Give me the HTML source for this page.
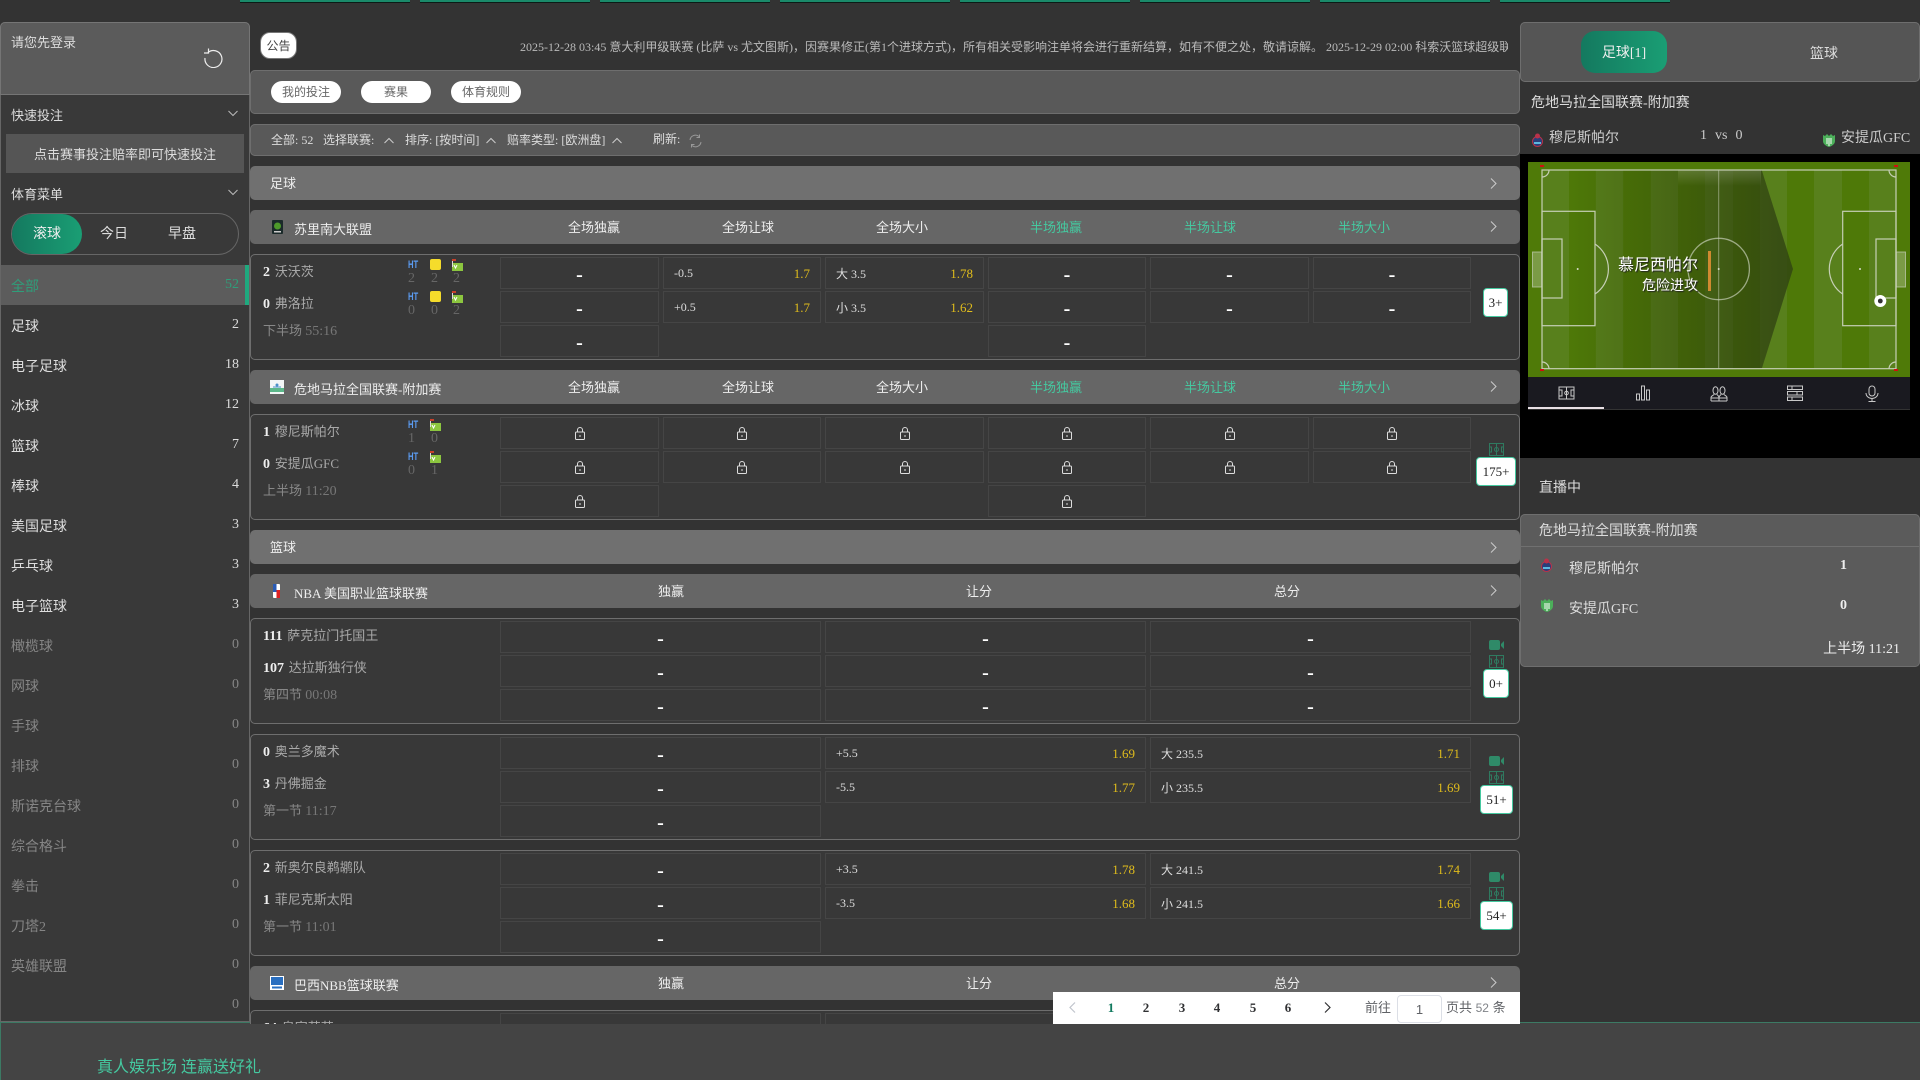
<!DOCTYPE html>
<html lang="zh"><head><meta charset="utf-8"><title>体育</title>
<style>
*{box-sizing:border-box}
html,body{margin:0;padding:0;width:1920px;height:1080px;overflow:hidden;background:#333;font-family:"Liberation Serif","WenQuanYi Zen Hei","Noto Sans CJK SC",serif;color:#ddd}
.a{position:absolute;white-space:nowrap}
.t{position:absolute;white-space:nowrap;line-height:20px;font-size:13px}
.ban{position:absolute;top:0;width:170px;height:3px;background:#1a8a6a;border-bottom:1px solid #0b1b16}
.pill{position:absolute;top:81px;width:70px;height:22px;background:#fff;border-radius:11px;color:#666;font-size:12px;line-height:22px;text-align:center}
.bar{position:absolute;left:250px;width:1270px;background:#595959;box-shadow:inset 0 0 0 1px #6e6e6e;border-radius:5px}
.sec{position:absolute;left:250px;width:1270px;height:34px;background:#707070;border-radius:5px}
.lg{position:absolute;left:250px;width:1270px;height:34px;background:#666;border-radius:5px}
.lg .t,.sec .t{color:#eee}
.g{color:#45c9a0!important}
.h{transform:translateX(-50%);top:8px}
.n{top:10px;left:44px}
.cv{position:absolute;left:1240px;top:12px;width:7px;height:11px;fill:none;stroke:#ccc;stroke-width:1}
.lg .cv{top:11px}
.m{position:absolute;left:250px;width:1270px;height:106px;background:#383838;box-shadow:inset 0 0 0 1px #6e6e6e;border-radius:5px}
.c{position:absolute;height:32px;border:1px solid #454545;display:flex;align-items:center;justify-content:center;font-size:12px;color:#ddd}
.c.o{justify-content:space-between;padding:1px 10px 0}
.c i{font-style:normal;color:#e0bc1c;font-size:13px}
.r1{top:3px}.r2{top:37px}.r3{top:71px}
.c1{left:250px;width:159px}.c2{left:413px;width:158px}.c3{left:575px;width:159px}.c4{left:738px;width:158px}.c5{left:900px;width:159px}.c6{left:1063px;width:158px}
.w1{left:250px;width:321px}.w2{left:575px;width:321px}.w3{left:900px;width:321px}
.d{font-weight:bold;font-size:20px;color:#fff;position:relative;top:2px;line-height:20px}
.l{width:10px;height:13px;fill:none;stroke:#ddd;stroke-width:1}
.tm{left:13px;color:#a9a9a9}
.tm b{color:#eee;font-size:14px;margin-right:1.500px}
.ti{left:13px;top:67px;color:#888}
.ti span{font-size:14px;color:#777}
.ht{position:absolute;font:bold 11px/12px "Liberation Sans",sans-serif;color:#5b9bf0;transform:scaleX(.7);transform-origin:left}
.num{position:absolute;font-size:14px;line-height:16px;color:#666;margin-top:1px}
.yc{position:absolute;width:11px;height:11px;background:#f5dc2b;border-radius:2px}
.fl{position:absolute;width:11px;height:12px}
.more{position:absolute;background:#fff;border:1px solid #45c9a0;border-radius:4px;color:#222;font-size:13px;text-align:center;height:29px;line-height:28px;top:34px}
.pi{position:absolute;width:15px;height:13px;fill:none;stroke:#2f7a60;stroke-width:1}
.cam{position:absolute;width:15px;height:10px;fill:#2f8a68}
.li{position:absolute;left:11px;font-size:14px;line-height:20px;color:#ddd;white-space:nowrap;margin-top:2px}
.ct{position:absolute;right:1681px;font-size:14px;line-height:20px;color:#ddd;white-space:nowrap;margin-top:1px}
.z{color:#858585}
.pg{position:absolute;top:0;font:bold 13px/32px "Liberation Serif",serif;color:#303133;transform:translateX(-50%)}
.ico{position:absolute;top:385px;width:18px;height:17px;fill:none;stroke:#c8c8c8;stroke-width:1}
</style></head><body>
<svg width="0" height="0" style="position:absolute">
<symbol id="lock" viewBox="0 0 10 13"><path d="M2.5 5V3a2.5 2.5 0 0 1 5 0v2"/><rect x=".5" y="5" width="9" height="7.5" rx="1"/><path d="M5 8v2"/></symbol>
<symbol id="chr" viewBox="0 0 7 11"><path d="M1 .5l5 5-5 5"/></symbol>
<symbol id="pit" viewBox="0 0 15 13"><rect x=".5" y=".5" width="14" height="12"/><path d="M7.5.5v12M.5 4h2v5h-2M14.5 4h-2v5h2"/><circle cx="7.5" cy="6.5" r="2"/></symbol>
<symbol id="cam" viewBox="0 0 15 10"><rect width="11" height="10" rx="2"/><path d="M12 4l3-3v8l-3-3z"/></symbol>
<symbol id="cor" viewBox="0 0 11 12"><rect y="4" width="11" height="8" fill="#8cc63f"/><rect width="4" height="2" fill="#c8402a"/><rect y="2" width="1" height="6" fill="#ddd"/><path d="M2 6l1.5 3 1.5-3" fill="none" stroke="#fff"/></symbol>
</svg>

<!-- footer -->
<div class="a" style="left:0;top:1022px;width:1920px;height:58px;background:#444"></div>
<div class="a" style="left:0;top:1022px;width:250px;height:1px;background:#3c7a64"></div>
<div class="a" style="left:1520px;top:1022px;width:400px;height:1px;background:#3c7a64"></div>
<div class="a" style="left:0;top:1022px;width:1px;height:58px;background:#3c7a64"></div>
<div class="a" style="left:97px;top:1058px;font-size:16px;line-height:20px;color:#45c9a0">真人娱乐场 连赢送好礼</div>

<!-- banners -->
<div class="ban" style="left:240px"></div><div class="ban" style="left:420px"></div><div class="ban" style="left:600px"></div><div class="ban" style="left:780px"></div><div class="ban" style="left:960px"></div><div class="ban" style="left:1140px"></div><div class="ban" style="left:1320px"></div><div class="ban" style="left:1500px"></div>

<!-- LEFT -->
<div class="a" style="left:0;top:22px;width:250px;height:1000px;background:#393939;border:1px solid #666;border-top:0;border-radius:5px 5px 0 0"></div>
<div class="a" style="left:0;top:22px;width:250px;height:73px;background:#5b5b5b;border:1px solid #757575;border-radius:5px 5px 0 0"></div>
<div class="t" style="left:11px;top:33px;color:#ddd">请您先登录</div>
<svg class="a" style="left:203px;top:47px" width="20" height="21" fill="none" stroke="#eee" stroke-width="1.2"><path d="M5 5.5A8.5 8.5 0 1 1 2 11"/><path d="M5.500 1.500v4.500h-4.500"/></svg>
<div class="t" style="left:11px;top:106px;color:#ddd">快速投注</div>
<svg class="a" style="left:228px;top:110px" width="10" height="7" fill="none" stroke="#bbb"><path d="M.5 1l4.500 4.500L9.500 1"/></svg>
<div class="a" style="left:6px;top:134px;width:238px;height:39px;background:#555;text-align:center;font-size:13px;line-height:41px;color:#ddd">点击赛事投注赔率即可快速投注</div>
<div class="t" style="left:11px;top:185px;color:#ddd">体育菜单</div>
<svg class="a" style="left:228px;top:189px" width="10" height="7" fill="none" stroke="#bbb"><path d="M.5 1l4.500 4.500L9.500 1"/></svg>
<div class="a" style="left:11px;top:213px;width:228px;height:42px;border:1px solid #666;border-radius:21px"></div>
<div class="a" style="left:12px;top:214px;width:70px;height:40px;border-radius:20px;background:linear-gradient(90deg,#14795f,#1a9e74);text-align:center;font-size:14px;line-height:41px;color:#eee">滚球</div>
<div class="t" style="left:100px;top:225px;font-size:14px;color:#ddd">今日</div>
<div class="t" style="left:168px;top:225px;font-size:14px;color:#ddd">早盘</div>
<div class="a" style="left:1px;top:265px;width:248px;height:40px;background:#5c5c5c"></div>
<div class="a" style="left:245px;top:265px;width:4px;height:40px;background:#1fa97e"></div>
<div class="li" style="top:276px;color:#2f9e7a">全部</div><div class="ct" style="top:274px;color:#2f9e7a">52</div>
<div class="li" style="top:316px">足球</div><div class="ct" style="top:314px">2</div>
<div class="li" style="top:356px">电子足球</div><div class="ct" style="top:354px">18</div>
<div class="li" style="top:396px">冰球</div><div class="ct" style="top:394px">12</div>
<div class="li" style="top:436px">篮球</div><div class="ct" style="top:434px">7</div>
<div class="li" style="top:476px">棒球</div><div class="ct" style="top:474px">4</div>
<div class="li" style="top:516px">美国足球</div><div class="ct" style="top:514px">3</div>
<div class="li" style="top:556px">乒乓球</div><div class="ct" style="top:554px">3</div>
<div class="li" style="top:596px">电子篮球</div><div class="ct" style="top:594px">3</div>
<div class="li z" style="top:636px">橄榄球</div><div class="ct z" style="top:634px">0</div>
<div class="li z" style="top:676px">网球</div><div class="ct z" style="top:674px">0</div>
<div class="li z" style="top:716px">手球</div><div class="ct z" style="top:714px">0</div>
<div class="li z" style="top:756px">排球</div><div class="ct z" style="top:754px">0</div>
<div class="li z" style="top:796px">斯诺克台球</div><div class="ct z" style="top:794px">0</div>
<div class="li z" style="top:836px">综合格斗</div><div class="ct z" style="top:834px">0</div>
<div class="li z" style="top:876px">拳击</div><div class="ct z" style="top:874px">0</div>
<div class="li z" style="top:916px">刀塔2</div><div class="ct z" style="top:914px">0</div>
<div class="li z" style="top:956px">英雄联盟</div><div class="ct z" style="top:954px">0</div>
<div class="ct z" style="top:994px">0</div>

<!-- MAIN -->
<div class="a" style="left:0;top:0;width:1920px;height:1024px;overflow:hidden;pointer-events:none">
<div class="a" style="left:250px;top:3px;width:1270px;height:1021px;background:#333"></div>
<div class="a" style="left:260px;top:32px;width:37px;height:27px;background:#fff;border:1px solid #777;border-radius:10px;color:#444;font-size:12px;line-height:27px;text-align:center">公告</div>
<div class="a" style="left:520px;top:37px;width:988px;overflow:hidden;font-size:12px;line-height:20px;color:#bbb">2025-12-28 03:45 意大利甲级联赛 (比萨 vs 尤文图斯)，因赛果修正(第1个进球方式)，所有相关受影响注单将会进行重新结算，如有不便之处，敬请谅解。 2025-12-29 02:00 科索沃篮球超级联赛</div>
<div class="bar" style="top:70px;height:44px"></div>
<div class="pill" style="left:271px">我的投注</div><div class="pill" style="left:361px">赛果</div><div class="pill" style="left:451px">体育规则</div>
<div class="bar" style="top:124px;height:32px"></div>
<div class="t" style="left:271px;top:130px;font-size:12px">全部: 52</div>
<div class="t" style="left:323px;top:130px;font-size:12px">选择联赛:</div>
<svg class="a" style="left:384px;top:137px" width="10" height="7" fill="none" stroke="#ccc"><path d="M.5 6L5 1.500 9.500 6"/></svg>
<div class="t" style="left:405px;top:130px;font-size:12px">排序: [按时间]</div>
<svg class="a" style="left:486px;top:137px" width="10" height="7" fill="none" stroke="#ccc"><path d="M.5 6L5 1.500 9.500 6"/></svg>
<div class="t" style="left:507px;top:130px;font-size:12px">赔率类型: [欧洲盘]</div>
<svg class="a" style="left:612px;top:137px" width="10" height="7" fill="none" stroke="#ccc"><path d="M.5 6L5 1.500 9.500 6"/></svg>
<div class="t" style="left:653px;top:129px;font-size:12px">刷新:</div>
<svg class="a" style="left:689px;top:134px" width="13" height="14" fill="none" stroke="#999"><path d="M1 6a5.500 5.500 0 0 1 9-3.500M12 8a5.500 5.500 0 0 1-9 3.500M10.500 .5v3h-3M2.500 13.500v-3h3"/></svg>

<div class="sec" style="top:166px"><div class="t" style="left:20px;top:8px">足球</div><svg class="cv" viewBox="0 0 7 11"><use href="#chr"/></svg></div>

<div class="lg" style="top:210px"><svg class="a" style="left:22px;top:10px" width="11" height="14"><rect width="11" height="14" rx="1" fill="#1b2a2a"/><circle cx="5.500" cy="6" r="3.500" fill="#4d9a2a"/><rect x="2" y="11" width="7" height="1.500" fill="#ccc"/></svg>
<div class="t n">苏里南大联盟</div><div class="t h" style="left:344px">全场独赢</div><div class="t h" style="left:498px">全场让球</div><div class="t h" style="left:652px">全场大小</div><div class="t h g" style="left:806px">半场独赢</div><div class="t h g" style="left:960px">半场让球</div><div class="t h g" style="left:1114px">半场大小</div><svg class="cv" viewBox="0 0 7 11"><use href="#chr"/></svg></div>

<div class="m" style="top:254px">
<div class="t tm" style="top:8px"><b>2</b> 沃沃茨</div><div class="t tm" style="top:40px"><b>0</b> 弗洛拉</div><div class="t ti">下半场 <span>55:16</span></div>
<div class="ht" style="left:158px;top:5px">HT</div><div class="yc" style="left:180px;top:5px"></div><svg class="fl" style="left:202px;top:5px"><use href="#cor"/></svg>
<div class="num" style="left:158px;top:16px">2</div><div class="num" style="left:181px;top:16px">2</div><div class="num" style="left:203px;top:16px">2</div>
<div class="ht" style="left:158px;top:37px">HT</div><div class="yc" style="left:180px;top:37px"></div><svg class="fl" style="left:202px;top:37px"><use href="#cor"/></svg>
<div class="num" style="left:158px;top:48px">0</div><div class="num" style="left:181px;top:48px">0</div><div class="num" style="left:203px;top:48px">2</div>
<div class="c c1 r1"><b class="d">-</b></div><div class="c c2 r1 o"><span>-0.5</span><i>1.7</i></div><div class="c c3 r1 o"><span>大 3.5</span><i>1.78</i></div><div class="c c4 r1"><b class="d">-</b></div><div class="c c5 r1"><b class="d">-</b></div><div class="c c6 r1"><b class="d">-</b></div>
<div class="c c1 r2"><b class="d">-</b></div><div class="c c2 r2 o"><span>+0.5</span><i>1.7</i></div><div class="c c3 r2 o"><span>小 3.5</span><i>1.62</i></div><div class="c c4 r2"><b class="d">-</b></div><div class="c c5 r2"><b class="d">-</b></div><div class="c c6 r2"><b class="d">-</b></div>
<div class="c c1 r3"><b class="d">-</b></div><div class="c c4 r3"><b class="d">-</b></div>
<div class="more" style="left:1233px;width:25px">3+</div>
</div>

<div class="lg" style="top:370px"><svg class="a" style="left:20px;top:10px" width="14" height="14"><rect width="14" height="14" fill="#f2f6f6"/><rect y="8" width="14" height="4" fill="#5cb88a"/><path d="M3 7h8" stroke="#4a90c8"/><circle cx="7" cy="5" r="1.500" fill="#4a90c8"/></svg>
<div class="t n">危地马拉全国联赛-附加赛</div><div class="t h" style="left:344px">全场独赢</div><div class="t h" style="left:498px">全场让球</div><div class="t h" style="left:652px">全场大小</div><div class="t h g" style="left:806px">半场独赢</div><div class="t h g" style="left:960px">半场让球</div><div class="t h g" style="left:1114px">半场大小</div><svg class="cv" viewBox="0 0 7 11"><use href="#chr"/></svg></div>

<div class="m" style="top:414px">
<div class="t tm" style="top:8px"><b>1</b> 穆尼斯帕尔</div><div class="t tm" style="top:40px"><b>0</b> 安提瓜GFC</div><div class="t ti">上半场 <span>11:20</span></div>
<div class="ht" style="left:158px;top:5px">HT</div><svg class="fl" style="left:180px;top:5px"><use href="#cor"/></svg>
<div class="num" style="left:158px;top:16px">1</div><div class="num" style="left:181px;top:16px">0</div>
<div class="ht" style="left:158px;top:37px">HT</div><svg class="fl" style="left:180px;top:37px"><use href="#cor"/></svg>
<div class="num" style="left:158px;top:48px">0</div><div class="num" style="left:181px;top:48px">1</div>
<div class="c c1 r1"><svg class="l"><use href="#lock"/></svg></div><div class="c c2 r1"><svg class="l"><use href="#lock"/></svg></div><div class="c c3 r1"><svg class="l"><use href="#lock"/></svg></div><div class="c c4 r1"><svg class="l"><use href="#lock"/></svg></div><div class="c c5 r1"><svg class="l"><use href="#lock"/></svg></div><div class="c c6 r1"><svg class="l"><use href="#lock"/></svg></div>
<div class="c c1 r2"><svg class="l"><use href="#lock"/></svg></div><div class="c c2 r2"><svg class="l"><use href="#lock"/></svg></div><div class="c c3 r2"><svg class="l"><use href="#lock"/></svg></div><div class="c c4 r2"><svg class="l"><use href="#lock"/></svg></div><div class="c c5 r2"><svg class="l"><use href="#lock"/></svg></div><div class="c c6 r2"><svg class="l"><use href="#lock"/></svg></div>
<div class="c c1 r3"><svg class="l"><use href="#lock"/></svg></div><div class="c c4 r3"><svg class="l"><use href="#lock"/></svg></div>
<svg class="pi" style="left:1239px;top:29px"><use href="#pit"/></svg>
<div class="more" style="left:1226px;width:40px;top:43px">175+</div>
</div>

<div class="sec" style="top:530px"><div class="t" style="left:20px;top:8px">篮球</div><svg class="cv" viewBox="0 0 7 11"><use href="#chr"/></svg></div>

<div class="lg" style="top:574px"><svg class="a" style="left:23px;top:10px" width="7" height="14"><rect width="7" height="14" rx="1" fill="#fff"/><rect x="0" y="0" width="3.500" height="8" fill="#2a5bb5"/><rect x="3.500" y="6" width="3.500" height="8" fill="#d22"/></svg>
<div class="t n">NBA 美国职业篮球联赛</div><div class="t h" style="left:421px">独赢</div><div class="t h" style="left:729px">让分</div><div class="t h" style="left:1037px">总分</div><svg class="cv" viewBox="0 0 7 11"><use href="#chr"/></svg></div>

<div class="m" style="top:618px">
<div class="t tm" style="top:8px"><b>111</b> 萨克拉门托国王</div><div class="t tm" style="top:40px"><b>107</b> 达拉斯独行侠</div><div class="t ti">第四节 <span>00:08</span></div>
<div class="c w1 r1"><b class="d">-</b></div><div class="c w2 r1"><b class="d">-</b></div><div class="c w3 r1"><b class="d">-</b></div>
<div class="c w1 r2"><b class="d">-</b></div><div class="c w2 r2"><b class="d">-</b></div><div class="c w3 r2"><b class="d">-</b></div>
<div class="c w1 r3"><b class="d">-</b></div><div class="c w2 r3"><b class="d">-</b></div><div class="c w3 r3"><b class="d">-</b></div>
<svg class="cam" style="left:1239px;top:22px"><use href="#cam"/></svg><svg class="pi" style="left:1239px;top:37px"><use href="#pit"/></svg>
<div class="more" style="left:1233px;width:26px;top:51px">0+</div>
</div>

<div class="m" style="top:734px">
<div class="t tm" style="top:8px"><b>0</b> 奥兰多魔术</div><div class="t tm" style="top:40px"><b>3</b> 丹佛掘金</div><div class="t ti">第一节 <span>11:17</span></div>
<div class="c w1 r1"><b class="d">-</b></div><div class="c w2 r1 o"><span>+5.5</span><i>1.69</i></div><div class="c w3 r1 o"><span>大 235.5</span><i>1.71</i></div>
<div class="c w1 r2"><b class="d">-</b></div><div class="c w2 r2 o"><span>-5.5</span><i>1.77</i></div><div class="c w3 r2 o"><span>小 235.5</span><i>1.69</i></div>
<div class="c w1 r3"><b class="d">-</b></div>
<svg class="cam" style="left:1239px;top:22px"><use href="#cam"/></svg><svg class="pi" style="left:1239px;top:37px"><use href="#pit"/></svg>
<div class="more" style="left:1230px;width:33px;top:51px">51+</div>
</div>

<div class="m" style="top:850px">
<div class="t tm" style="top:8px"><b>2</b> 新奥尔良鹈鹕队</div><div class="t tm" style="top:40px"><b>1</b> 菲尼克斯太阳</div><div class="t ti">第一节 <span>11:01</span></div>
<div class="c w1 r1"><b class="d">-</b></div><div class="c w2 r1 o"><span>+3.5</span><i>1.78</i></div><div class="c w3 r1 o"><span>大 241.5</span><i>1.74</i></div>
<div class="c w1 r2"><b class="d">-</b></div><div class="c w2 r2 o"><span>-3.5</span><i>1.68</i></div><div class="c w3 r2 o"><span>小 241.5</span><i>1.66</i></div>
<div class="c w1 r3"><b class="d">-</b></div>
<svg class="cam" style="left:1239px;top:22px"><use href="#cam"/></svg><svg class="pi" style="left:1239px;top:37px"><use href="#pit"/></svg>
<div class="more" style="left:1230px;width:33px;top:51px">54+</div>
</div>

<div class="lg" style="top:966px"><svg class="a" style="left:20px;top:10px" width="14" height="14"><rect width="14" height="14" fill="#fff"/><rect x="1" y="1" width="12" height="8" fill="#2a6fc0"/><rect x="2" y="10.500" width="10" height="2" fill="#2a6fc0"/></svg>
<div class="t n">巴西NBB篮球联赛</div><div class="t h" style="left:421px">独赢</div><div class="t h" style="left:729px">让分</div><div class="t h" style="left:1037px">总分</div><svg class="cv" viewBox="0 0 7 11"><use href="#chr"/></svg></div>

<div class="m" style="top:1010px">
<div class="t tm" style="top:8px"><b>64</b> 皇家苏苏</div>
<div class="c w1 r1"></div><div class="c w2 r1"></div><div class="c w3 r1"></div>
</div>

<div class="a" style="left:1053px;top:992px;width:467px;height:32px;background:#fff">
<svg class="a" style="left:16px;top:10px" width="7" height="11" fill="none" stroke="#c0c4cc" stroke-width="1.200"><path d="M6 .5l-5 5 5 5"/></svg>
<div class="pg" style="left:58px;color:#127a5f">1</div><div class="pg" style="left:93px">2</div><div class="pg" style="left:129px">3</div><div class="pg" style="left:164px">4</div><div class="pg" style="left:200px">5</div><div class="pg" style="left:235px">6</div>
<svg class="a" style="left:271px;top:10px" width="7" height="11" fill="none" stroke="#303133" stroke-width="1.200"><path d="M1 .5l5 5-5 5"/></svg>
<div class="t" style="left:312px;top:6px;color:#606266">前往</div>
<div class="a" style="left:344px;top:3px;width:45px;height:28px;border:1px solid #dcdfe6;border-radius:4px;text-align:center;font:13px/27px 'Liberation Sans',sans-serif;color:#606266">1</div>
<div class="t" style="left:393px;top:6px;color:#606266;font-family:'Liberation Sans','WenQuanYi Zen Hei',sans-serif"><span>页共 </span><span style="font-size:12px;color:#808388">52</span><span> 条</span></div>
</div>
</div>

<!-- RIGHT -->
<div class="a" style="left:1520px;top:22px;width:400px;height:60px;background:#555;box-shadow:inset 0 0 0 1px #6e6e6e;border-radius:5px"></div>
<div class="a" style="left:1581px;top:31px;width:86px;height:42px;border-radius:14px;background:linear-gradient(90deg,#14795f,#1a9e74);text-align:center;font-size:14px;line-height:46px;color:#eee">足球[1]</div>
<div class="t" style="left:1810px;top:45px;font-size:14px;color:#ddd">篮球</div>
<div class="t" style="left:1531px;top:94px;font-size:14px;color:#ddd">危地马拉全国联赛-附加赛</div>
<svg class="a" style="left:1532px;top:133px" width="11" height="14"><circle cx="5.500" cy="8.500" r="5" fill="#2a3f7a" stroke="#b8324a"/><circle cx="5.500" cy="3" r="2.500" fill="#b8324a"/><rect x="2" y="9" width="7" height="2" fill="#5cb8e0"/></svg>
<div class="t" style="left:1549px;top:129px;font-size:14px;color:#ccc">穆尼斯帕尔</div>
<div class="t" style="left:1700px;top:126px;font-size:14px;color:#ccc;word-spacing:4.500px">1 vs 0</div>
<svg class="a" style="left:1823px;top:133px" width="12" height="14"><path d="M0 2l2 1 2-2 2 2 2-2 2 2 2-1v6c0 3-3 5-6 6-3-1-6-3-6-6z" fill="#4caf5a"/><path d="M4 5v6M6 5v8M8 5v6" stroke="#fff"/></svg>
<div class="t" style="left:1841px;top:129px;font-size:14px;color:#ccc">安提瓜GFC</div>

<div class="a" style="left:1520px;top:154px;width:400px;height:304px;background:#000"></div>
<svg class="a" style="left:1528px;top:162px" width="382" height="215" viewBox="0 0 382 215">
<defs><linearGradient id="gd" gradientUnits="userSpaceOnUse" x1="40" y1="0" x2="250" y2="0"><stop offset="0" stop-color="#2a3a00" stop-opacity="0"/><stop offset="1" stop-color="#2e3f12" stop-opacity=".75"/></linearGradient>
<linearGradient id="gt" x1="0" y1="0" x2="0" y2="1"><stop offset="0" stop-color="#fff" stop-opacity=".16"/><stop offset="1" stop-color="#fff" stop-opacity="0"/></linearGradient></defs>
<rect width="382" height="215" fill="#4f7a08"/>
<g fill="#58801c"><rect x="14" y="8" width="27" height="199"/><rect x="67.700" y="8" width="27.600" height="199"/><rect x="122.700" y="8" width="27.300" height="199"/><rect x="177" y="8" width="28" height="199"/><rect x="232" y="8" width="27" height="199"/><rect x="286" y="8" width="28" height="199"/><rect x="341" y="8" width="27" height="199"/></g>
<g fill="#4e7908"><rect x="41" y="8" width="26.700" height="199"/><rect x="95.300" y="8" width="27.400" height="199"/><rect x="150" y="8" width="27" height="199"/><rect x="205" y="8" width="27" height="199"/><rect x="259" y="8" width="27" height="199"/><rect x="314" y="8" width="27" height="199"/></g>
<path d="M40 8H233.700L265 107 233.700 207H40z" fill="url(#gd)"/>
<rect x="150" y="8" width="83" height="16" fill="url(#gt)"/>
<g fill="none" stroke="#c6cfb6" stroke-width="1.200">
<rect x="14" y="8" width="354" height="198.700"/>
<rect x="14" y="49.300" width="53" height="114.400"/><rect x="14" y="77" width="20" height="59"/><path d="M67 82A30 30 0 0 1 67 132"/>
<rect x="314.700" y="49.300" width="53.300" height="114.400"/><rect x="348" y="77" width="20" height="59"/><path d="M314.700 82A30 30 0 0 0 314.700 132"/>
<path d="M14 15A7 7 0 0 0 21 8M361 8A7 7 0 0 0 368 15M14 200A7 7 0 0 1 21 207M361 207A7 7 0 0 1 368 200"/>
</g>
<g fill="#fff" fill-opacity=".25" stroke="#c6cfb6" stroke-opacity=".7"><rect x="4.500" y="90" width="9.500" height="35"/><rect x="368" y="90" width="9.500" height="35"/></g>
<path d="M190.700 8V207" stroke="#c6cfb6" stroke-opacity=".55" stroke-width="1"/>
<circle cx="190.700" cy="107" r="30.700" fill="none" stroke="#c6cfb6" stroke-opacity=".7" stroke-width="1.300"/>
<g fill="#d8dccb"><circle cx="49.700" cy="107" r="1"/><circle cx="190.700" cy="107" r="1"/><circle cx="332" cy="107" r="1"/></g>
<g fill="#d01010"><rect x="12" y="3" width="4" height="2"/><rect x="366" y="3" width="4" height="2"/><rect x="12" y="207" width="4" height="2"/><rect x="366" y="207" width="4" height="2"/></g>
<rect x="180" y="89" width="3" height="40" fill="#d08a30"/>
<circle cx="352.300" cy="139" r="6" fill="#fff"/><circle cx="352.300" cy="139" r="2.400" fill="#333"/>
</svg>
<div class="a" style="left:1541px;top:254px;width:157px;text-align:right;font-size:16px;line-height:24px;color:#fff;text-shadow:1px 1px 1px #222">慕尼西帕尔</div>
<div class="a" style="left:1541px;top:277px;width:157px;text-align:right;font-size:14px;line-height:20px;color:#fff;text-shadow:1px 1px 1px #222">危险进攻</div>

<div class="a" style="left:1528px;top:377px;width:382px;height:33px;background:#1a1a20;border-bottom:1px solid #333"></div>
<div class="a" style="left:1528px;top:407px;width:76px;height:2px;background:#e8e0e4"></div>
<svg class="ico" style="left:1558px"><rect x="1" y="2" width="15" height="12" stroke-width="1"/><path d="M8.500 2v12M1 5h3v6h-3M16 5h-3v6h3"/><circle cx="8.500" cy="8" r="1.800"/></svg>
<svg class="ico" style="left:1635px"><rect x="1.500" y="9" width="3" height="6"/><rect x="6.500" y="1" width="3" height="14"/><rect x="11.500" y="5" width="3" height="10"/></svg>
<svg class="ico" style="left:1710px"><ellipse cx="5.500" cy="5.500" rx="2.500" ry="3.800"/><ellipse cx="12.500" cy="5.500" rx="2.500" ry="3.800"/><path d="M1 16v-3.500c0-1.500 2-2 3-3M7 9.500c1 1 2 1.500 2 3V16M9 12.500c0-1.500 1-2 2-3M14 9.500c1 1 3 1.500 3 3V16M1 16h16M1 13h16"/></svg>
<svg class="ico" style="left:1787px"><rect x=".5" y="1" width="15" height="3.500"/><rect x=".5" y="6.500" width="15" height="3.500"/><rect x=".5" y="12" width="15" height="3.500"/><path d="M5 1v3.500M10 6.500V10M5 12v3.500"/></svg>
<svg class="ico" style="left:1863px"><rect x="6" y="1" width="6" height="10" rx="3"/><path d="M3 8a6 5.500 0 0 0 12 0M9 13.500v3M5.500 16.500h7"/></svg>

<div class="t" style="left:1539px;top:479px;font-size:14px;color:#ddd">直播中</div>
<div class="a" style="left:1520px;top:514px;width:400px;height:153px;background:#5b5b5b;box-shadow:inset 0 0 0 1px #6e6e6e;border-radius:5px"></div>
<div class="a" style="left:1521px;top:546px;width:398px;height:1px;background:#707070"></div>
<div class="t" style="left:1539px;top:522px;font-size:14px;color:#ddd">危地马拉全国联赛-附加赛</div>
<svg class="a" style="left:1541px;top:558px" width="11" height="14"><circle cx="5.500" cy="8.500" r="5" fill="#2a3f7a" stroke="#b8324a"/><circle cx="5.500" cy="3" r="2.500" fill="#b8324a"/><rect x="2" y="9" width="7" height="2" fill="#5cb8e0"/></svg>
<div class="t" style="left:1569px;top:560px;font-size:14px;color:#ddd">穆尼斯帕尔</div>
<div class="t" style="left:1840px;top:556px;font-size:14px;font-weight:bold;color:#eee">1</div>
<svg class="a" style="left:1541px;top:598px" width="12" height="14"><path d="M0 2l2 1 2-2 2 2 2-2 2 2 2-1v6c0 3-3 5-6 6-3-1-6-3-6-6z" fill="#4caf5a"/><path d="M4 5v6M6 5v8M8 5v6" stroke="#fff"/></svg>
<div class="t" style="left:1569px;top:600px;font-size:14px;color:#ddd">安提瓜GFC</div>
<div class="t" style="left:1840px;top:596px;font-size:14px;font-weight:bold;color:#eee">0</div>
<div class="t" style="left:1700px;top:640px;width:200px;text-align:right;font-size:14px;color:#eee">上半场 11:21</div>
</body></html>
